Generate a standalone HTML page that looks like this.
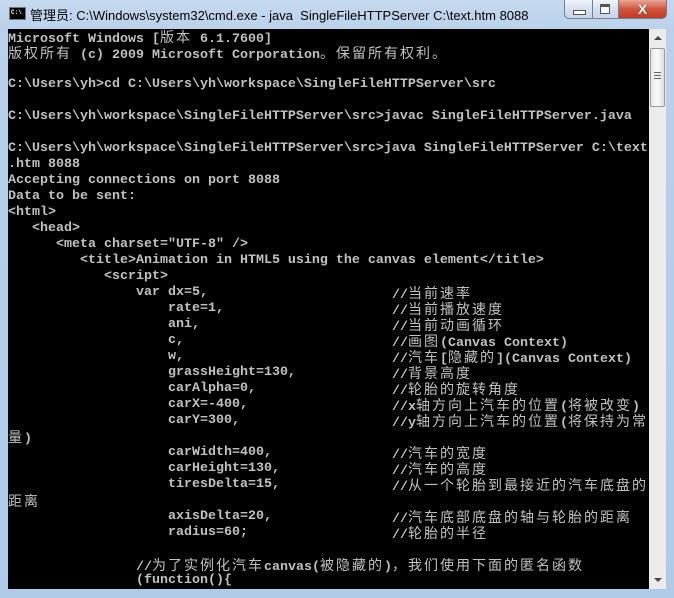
<!DOCTYPE html>
<html><head><meta charset="utf-8"><style>
body{margin:0;width:674px;height:598px;overflow:hidden;background:#bcd3ea;position:relative;font-family:"Liberation Sans","Noto Sans CJK SC",sans-serif}
.frame{position:absolute;left:0;top:0;width:674px;height:598px;background:linear-gradient(#c5d9ee,#b9d1ea 30px,#aecbe8);}
.title{position:absolute;left:30px;top:5px;font-size:13px;color:#000}
.ico{position:absolute;left:9px;top:7px;width:15px;height:11px;background:#000;border:1px solid #777}
.ico span{position:absolute;left:1px;top:1px;font:bold 6px "Liberation Mono";color:#fff}
.btn{position:absolute;top:0;height:18px;border:1px solid #6d7e96;border-top:none;background:linear-gradient(#f0f4f9,#d6e0ec 50%,#c8d5e6)}
.cl{background:linear-gradient(#e9a796,#d0553d 50%,#c23a22);border-radius:0 0 5px 0}
.con{position:absolute;left:8px;top:29px;width:641px;height:560px;background:#000;overflow:hidden}
.l{position:absolute;left:0;height:16px;line-height:16px;white-space:pre;font:bold 13.33px/16px "Liberation Mono",monospace;color:#c0c0c0}
.c{font-family:"Noto Sans CJK SC",sans-serif;font-weight:normal;font-size:14px;letter-spacing:2px}
.sb{position:absolute;left:649px;top:29px;width:17px;height:560px;background:#ebebeb}
.th{position:absolute;left:1px;top:19px;width:13px;height:57px;border:1px solid #999;border-radius:2px;background:linear-gradient(90deg,#e6e6e6,#fafafa 50%,#dcdcdc)}
</style></head><body>
<div class="frame"></div>
<div class="ico"><span>C:\</span></div>
<div class="title">管理员: C:\Windows\system32\cmd.exe - java&nbsp; SingleFileHTTPServer C:\text.htm 8088</div>
<div class="btn" style="left:564px;width:27px;border-radius:0 0 0 5px"><div style="position:absolute;left:8px;top:10px;width:11px;height:3px;background:#fff;border:1px solid #555"></div></div>
<div class="btn" style="left:593px;width:25px;border-left:none"><div style="position:absolute;left:7px;top:4px;width:8px;height:6px;border:1px solid #555;border-top:3px solid #555;background:#fff"></div></div>
<div class="btn cl" style="left:619px;width:47px;border-left:none"><div style="position:absolute;left:0;width:47px;top:0;text-align:center;color:#fff;font:bold 14px/18px 'Liberation Sans';text-shadow:0 0 1px #333">X</div></div>
<div class="con">
<div class="l" style="top:0">Microsoft Windows [<span class="c">版本</span> 6.1.7600]</div>
<div class="l" style="top:16px"><span class="c">版权所有</span> (c) 2009 Microsoft Corporation<span class="c">。保留所有权利。</span></div>
<div class="l" style="top:48px">C:\Users\yh&gt;cd C:\Users\yh\workspace\SingleFileHTTPServer\src</div>
<div class="l" style="top:80px">C:\Users\yh\workspace\SingleFileHTTPServer\src&gt;javac SingleFileHTTPServer.java</div>
<div class="l" style="top:112px">C:\Users\yh\workspace\SingleFileHTTPServer\src&gt;java SingleFileHTTPServer C:\text</div>
<div class="l" style="top:128px">.htm 8088</div>
<div class="l" style="top:144px">Accepting connections on port 8088</div>
<div class="l" style="top:160px">Data to be sent:</div>
<div class="l" style="top:176px">&lt;html&gt;</div>
<div class="l" style="top:192px">   &lt;head&gt;</div>
<div class="l" style="top:208px">      &lt;meta charset="UTF-8" /&gt;</div>
<div class="l" style="top:224px">         &lt;title&gt;Animation in HTML5 using the canvas element&lt;/title&gt;</div>
<div class="l" style="top:240px">            &lt;script&gt;</div>
<div class="l" style="top:256px">                var dx=5,</div><div class="l" style="top:256px;left:384px">//<span class="c">当前速率</span></div>
<div class="l" style="top:272px">                    rate=1,</div><div class="l" style="top:272px;left:384px">//<span class="c">当前播放速度</span></div>
<div class="l" style="top:288px">                    ani,</div><div class="l" style="top:288px;left:384px">//<span class="c">当前动画循环</span></div>
<div class="l" style="top:304px">                    c,</div><div class="l" style="top:304px;left:384px">//<span class="c">画图</span>(Canvas Context)</div>
<div class="l" style="top:320px">                    w,</div><div class="l" style="top:320px;left:384px">//<span class="c">汽车</span>[<span class="c">隐藏的</span>](Canvas Context)</div>
<div class="l" style="top:336px">                    grassHeight=130,</div><div class="l" style="top:336px;left:384px">//<span class="c">背景高度</span></div>
<div class="l" style="top:352px">                    carAlpha=0,</div><div class="l" style="top:352px;left:384px">//<span class="c">轮胎的旋转角度</span></div>
<div class="l" style="top:368px">                    carX=-400,</div><div class="l" style="top:368px;left:384px">//x<span class="c">轴方向上汽车的位置</span>(<span class="c">将被改变</span>)</div>
<div class="l" style="top:384px">                    carY=300,</div><div class="l" style="top:384px;left:384px">//y<span class="c">轴方向上汽车的位置</span>(<span class="c">将保持为常</span></div>
<div class="l" style="top:400px"><span class="c">量</span>)</div>
<div class="l" style="top:416px">                    carWidth=400,</div><div class="l" style="top:416px;left:384px">//<span class="c">汽车的宽度</span></div>
<div class="l" style="top:432px">                    carHeight=130,</div><div class="l" style="top:432px;left:384px">//<span class="c">汽车的高度</span></div>
<div class="l" style="top:448px">                    tiresDelta=15,</div><div class="l" style="top:448px;left:384px">//<span class="c">从一个轮胎到最接近的汽车底盘的</span></div>
<div class="l" style="top:464px"><span class="c">距离</span></div>
<div class="l" style="top:480px">                    axisDelta=20,</div><div class="l" style="top:480px;left:384px">//<span class="c">汽车底部底盘的轴与轮胎的距离</span></div>
<div class="l" style="top:496px">                    radius=60;</div><div class="l" style="top:496px;left:384px">//<span class="c">轮胎的半径</span></div>
<div class="l" style="top:528px">                //<span class="c">为了实例化汽车</span>canvas(<span class="c">被隐藏的</span>)<span class="c">，我们使用下面的匿名函数</span></div>
<div class="l" style="top:544px">                (function(){</div>
</div>
<div class="sb">
<div style="position:absolute;left:5px;top:7px;border:4px solid transparent;border-bottom:4px solid #444;border-top:none"></div>
<div class="th"><div style="position:absolute;left:3px;top:23px;width:7px;height:8px;background:repeating-linear-gradient(#666 0 1px,#eee 1px 3px)"></div></div>
<div style="position:absolute;left:5px;top:549px;border:4px solid transparent;border-top:4px solid #444;border-bottom:none"></div>
</div>
</body></html>
